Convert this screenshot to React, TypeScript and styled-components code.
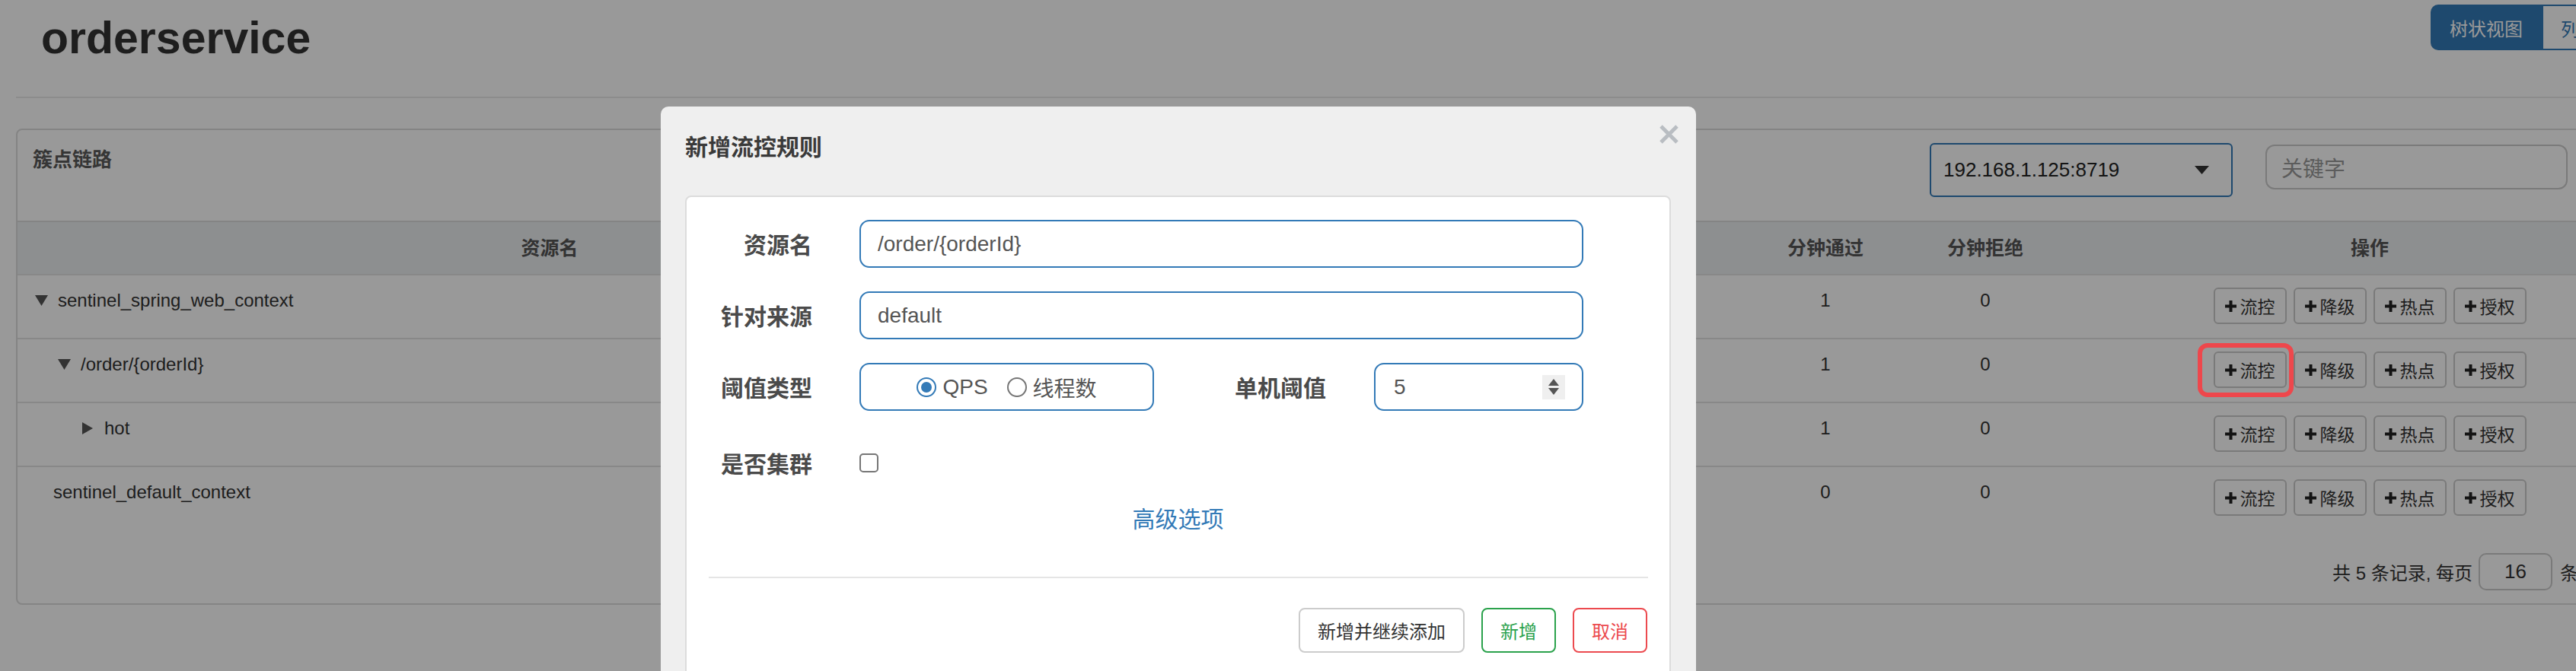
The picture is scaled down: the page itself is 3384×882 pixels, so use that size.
import React from 'react';
import styled, { createGlobalStyle } from 'styled-components';

const FONT = `"Liberation Sans", "Noto Sans CJK SC", sans-serif`;
const BLUE = '#337ab7';

const Global = createGlobalStyle`
  html, body { margin: 0; padding: 0; overflow: hidden; background: #fff; }
  body { font-family: ${FONT}; color: #333; }
  *, *::before, *::after { box-sizing: border-box; }
`;

const Page = styled.div`
  width: 3536px;
  height: 882px;
  padding: 0 21px;
`;

const Header = styled.header`
  display: flex;
  justify-content: space-between;
  align-items: flex-start;
  height: 129px;
  padding: 0 30px 0 33px;
  border-bottom: 2px solid #eaeaea;
`;

const Title = styled.h1`
  margin: 21px 0 0;
  font-size: 59px;
  line-height: 59px;
  font-weight: 700;
  color: #333;
`;

const ViewToggle = styled.div`
  display: flex;
  margin-top: 6px;
`;

const ToggleBtn = styled.button<{ $active?: boolean }>`
  width: 146px;
  height: 60px;
  font-family: ${FONT};
  font-size: 24px;
  border: 2px solid ${BLUE};
  background: ${p => (p.$active ? BLUE : '#fff')};
  color: ${p => (p.$active ? '#fff' : BLUE)};
  border-radius: ${p => (p.$active ? '10px 0 0 10px' : '0 10px 10px 0')};
  padding: 0;
`;

const Panel = styled.section`
  margin-top: 40px;
  border: 2px solid #ddd;
  border-radius: 8px;
  background: #fff;
  overflow: hidden;
`;

const PanelHeading = styled.div`
  display: flex;
  align-items: flex-start;
  height: 121px;
  padding: 0 20px;
  border-bottom: 2px solid #ddd;
`;

const HeadingTitle = styled.div`
  margin-top: 21px;
  font-size: 26px;
  line-height: 36px;
  font-weight: 700;
  color: #5a5a5a;
`;

const MachineSelect = styled.div`
  margin: 17px 0 0 auto;
  width: 398px;
  height: 71px;
  display: flex;
  align-items: center;
  justify-content: space-between;
  padding: 0 29px 0 16px;
  border: 2px solid ${BLUE};
  border-radius: 6px;
  font-size: 26px;
  color: #222;
`;

const KeywordInput = styled.div`
  margin: 19px 0 0 43px;
  width: 397px;
  height: 59px;
  display: flex;
  align-items: center;
  padding-left: 19px;
  border: 2px solid #ccc;
  border-radius: 12px;
  font-size: 28px;
  color: #999;
`;

const RefreshBtn = styled.div`
  margin: 19px 0 0 20px;
  width: 100px;
  height: 59px;
  display: flex;
  align-items: center;
  justify-content: center;
  border-radius: 10px;
  background: ${BLUE};
  color: #fff;
  font-size: 24px;
`;

const Table = styled.table`
  width: 100%;
  table-layout: fixed;
  border-collapse: separate;
  border-spacing: 0;
`;

const Th = styled.th`
  padding: 17px 0;
  line-height: 34px;
  font-size: 25px;
  font-weight: 700;
  color: #555;
  background: #eceef1;
  text-align: center;
  border-bottom: 2px solid #e3e3e3;
  white-space: nowrap;
`;

const Row = styled.tr`
  & > td {
    border-bottom: 2px solid #e3e3e3;
  }
  &:last-child > td {
    border-bottom: none;
  }
`;

const Td = styled.td<{ $center?: boolean }>`
  padding: 16px 0 18px;
  vertical-align: top;
  line-height: 34px;
  font-size: 24px;
  color: #333;
  text-align: ${p => (p.$center ? 'center' : 'left')};
`;

const TreeLabel = styled.div<{ $indent: number }>`
  display: flex;
  align-items: center;
  padding-left: ${p => p.$indent}px;
`;

const Caret = styled.svg<{ $gap: number }>`
  margin-right: ${p => p.$gap}px;
  flex: none;
`;

const OpsGroup = styled.div`
  display: inline-flex;
  gap: 9px;
`;

const OpWrap = styled.span`
  position: relative;
  display: inline-flex;
`;

const OpBtn = styled.button`
  height: 48px;
  display: inline-flex;
  align-items: center;
  gap: 5px;
  padding: 0 13px;
  border: 2px solid #ccc;
  border-radius: 6px;
  background: #fff;
  font-family: ${FONT};
  font-size: 23px;
  color: #333;
`;

const Highlight = styled.span`
  position: absolute;
  top: -11px;
  left: -21px;
  right: -9px;
  bottom: -12px;
  border: 6px solid #ee474c;
  border-radius: 13px;
  z-index: 30;
  pointer-events: none;
`;

const Footer = styled.div`
  display: flex;
  justify-content: flex-end;
  align-items: center;
  padding: 31px 20px 17px;
  font-size: 24px;
  color: #333;
`;

const PageSize = styled.div`
  width: 97px;
  height: 49px;
  margin: 0 10px 0 8px;
  display: flex;
  align-items: center;
  justify-content: center;
  border: 2px solid #ccc;
  border-radius: 10px;
  font-size: 26px;
`;

const Pager = styled.div`
  margin-left: 10px;
  width: 48px;
  height: 49px;
  display: flex;
  align-items: center;
  justify-content: center;
  background: ${BLUE};
  color: #fff;
  border-radius: 6px;
`;

const Backdrop = styled.div`
  position: fixed;
  inset: 0;
  background: rgba(0, 0, 0, 0.4);
  z-index: 10;
`;

const Modal = styled.div`
  position: absolute;
  top: 140px;
  left: 868px;
  width: 1360px;
  height: 800px;
  background: #efefef;
  border-radius: 10px;
  z-index: 20;
  display: flex;
  flex-direction: column;
`;

const ModalHeader = styled.div`
  display: flex;
  justify-content: space-between;
  align-items: flex-start;
  height: 117px;
  padding: 24px 23px 0 32px;
`;

const ModalTitle = styled.h4`
  margin: 12px 0 0;
  font-size: 30px;
  line-height: 36px;
  font-weight: 700;
  color: #3a3a3a;
`;

const CloseBtn = styled.svg`
  display: block;
`;

const Card = styled.div`
  margin: 0 33px 0 32px;
  flex: 1;
  background: #fff;
  border: 2px solid #dcdcdc;
  border-radius: 8px;
  padding-top: 30px;
`;

const FormRow = styled.div<{ $mt?: number }>`
  display: grid;
  grid-template-columns: 165px 951px;
  column-gap: 62px;
  align-items: center;
  margin-top: ${p => p.$mt ?? 0}px;
`;

const Label = styled.label`
  display: block;
  height: 63px;
  text-align: right;
  font-size: 30px;
  line-height: 58px;
  padding-top: 5px;
  font-weight: 700;
  color: #4a4a4a;
  white-space: nowrap;
`;

const TextBox = styled.div<{ $w?: number }>`
  height: 63px;
  width: ${p => (p.$w ? `${p.$w}px` : '100%')};
  display: flex;
  align-items: center;
  padding: 0 22px;
  border: 2px solid ${BLUE};
  border-radius: 13px;
  font-size: 28px;
  color: #555;
  flex: none;
`;

const Inline = styled.div`
  display: flex;
  align-items: center;
`;

const RadioBox = styled(TextBox)`
  justify-content: center;
  padding: 0;
`;

const RadioItem = styled.span`
  display: inline-flex;
  align-items: center;
  gap: 8px;
  margin-right: 25px;
  &:last-child { margin-right: 0; }
`;

const RadioDot = styled.span<{ $checked?: boolean }>`
  width: 26px;
  height: 26px;
  border-radius: 50%;
  border: 2px solid ${p => (p.$checked ? BLUE : '#767676')};
  display: inline-flex;
  align-items: center;
  justify-content: center;
  &::after {
    content: '';
    width: 14px;
    height: 14px;
    border-radius: 50%;
    background: ${p => (p.$checked ? BLUE : 'transparent')};
  }
`;

const InlineLabel = styled(Label)`
  width: 226px;
  margin-right: 63px;
`;

const NumberBox = styled(TextBox)`
  justify-content: space-between;
  padding: 0 22px 0 24px;
`;

const Spinner = styled.span`
  width: 30px;
  height: 32px;
  background: #efefef;
  display: flex;
  flex-direction: column;
  align-items: center;
  justify-content: center;
  gap: 3px;
`;

const Checkbox = styled.span`
  width: 25px;
  height: 25px;
  border: 2px solid #767676;
  border-radius: 5px;
  display: block;
`;

const AdvancedLink = styled.div`
  margin-top: 23px;
  text-align: center;
  font-size: 30px;
  line-height: 40px;
  color: ${BLUE};
`;

const Divider = styled.hr`
  margin: 55px 28px 0 29px;
  border: none;
  border-top: 2px solid #e5e5e5;
`;

const ActionBar = styled.div`
  display: flex;
  justify-content: flex-end;
  gap: 22px;
  margin: 39px 29px 0 0;
`;

const ActionBtn = styled.button<{ $tone: 'default' | 'green' | 'red' }>`
  height: 59px;
  padding: 0 23px;
  font-family: ${FONT};
  font-size: 24px;
  background: #fff;
  border-radius: 8px;
  border: 2px solid
    ${p => (p.$tone === 'green' ? '#2ba24c' : p.$tone === 'red' ? '#ec4a4f' : '#ccc')};
  color: ${p => (p.$tone === 'green' ? '#2ba24c' : p.$tone === 'red' ? '#ec4a4f' : '#333')};
`;

const PlusIcon = () => (
  <svg width="15" height="15" viewBox="0 0 15 15">
    <rect x="5.5" y="0" width="4" height="15" fill="#222" />
    <rect x="0" y="5.5" width="15" height="4" fill="#222" />
  </svg>
);

type Node = {
  name: string;
  indent: number;
  caret: 'down' | 'right' | null;
  pass: number;
  block: number;
};

const nodes: Node[] = [
  { name: 'sentinel_spring_web_context', indent: 23, caret: 'down', pass: 1, block: 0 },
  { name: '/order/{orderId}', indent: 53, caret: 'down', pass: 1, block: 0 },
  { name: 'hot', indent: 85, caret: 'right', pass: 1, block: 0 },
  { name: 'sentinel_default_context', indent: 47, caret: null, pass: 0, block: 0 },
];

const ops = ['流控', '降级', '热点', '授权'];

const columns: { title: string; width: number }[] = [
  { title: '资源名', width: 1398 },
  { title: '通过QPS', width: 218 },
  { title: '拒绝QPS', width: 218 },
  { title: '并发数', width: 218 },
  { title: '平均RT', width: 218 },
  { title: '分钟通过', width: 210 },
  { title: '分钟拒绝', width: 210 },
  { title: '操作', width: 800 },
];

export default function App() {
  return (
    <>
      <Global />
      <Page>
        <Header>
          <Title>orderservice</Title>
          <ViewToggle>
            <ToggleBtn $active>树状视图</ToggleBtn>
            <ToggleBtn>列表视图</ToggleBtn>
          </ViewToggle>
        </Header>

        <Panel>
          <PanelHeading>
            <HeadingTitle>簇点链路</HeadingTitle>
            <MachineSelect>
              <span>192.168.1.125:8719</span>
              <svg width="19" height="11" viewBox="0 0 19 11">
                <polygon points="0,0 19,0 9.5,11" fill="#333" />
              </svg>
            </MachineSelect>
            <KeywordInput>关键字</KeywordInput>
            <RefreshBtn>刷新</RefreshBtn>
          </PanelHeading>

          <Table>
            <colgroup>
              {columns.map(c => (
                <col key={c.title} style={{ width: c.width }} />
              ))}
            </colgroup>
            <thead>
              <tr>
                {columns.map(c => (
                  <Th key={c.title}>{c.title}</Th>
                ))}
              </tr>
            </thead>
            <tbody>
              {nodes.map((n, i) => (
                <Row key={n.name}>
                  <Td>
                    <TreeLabel $indent={n.indent}>
                      {n.caret === 'down' && (
                        <Caret $gap={13} width="17" height="14" viewBox="0 0 17 14">
                          <polygon points="0,0 17,0 8.5,14" fill="#555" />
                        </Caret>
                      )}
                      {n.caret === 'right' && (
                        <Caret $gap={15} width="14" height="16" viewBox="0 0 14 16">
                          <polygon points="0,0 14,8 0,16" fill="#555" />
                        </Caret>
                      )}
                      <span>{n.name}</span>
                    </TreeLabel>
                  </Td>
                  <Td $center>{n.pass}</Td>
                  <Td $center>0</Td>
                  <Td $center>0</Td>
                  <Td $center>0</Td>
                  <Td $center>{n.pass}</Td>
                  <Td $center>{n.block}</Td>
                  <Td $center>
                    <OpsGroup>
                      {ops.map((o, j) => (
                        <OpWrap key={o}>
                          <OpBtn>
                            <PlusIcon />
                            {o}
                          </OpBtn>
                          {i === 1 && j === 0 && <Highlight />}
                        </OpWrap>
                      ))}
                    </OpsGroup>
                  </Td>
                </Row>
              ))}
            </tbody>
          </Table>

          <Footer>
            <span>共 5 条记录, 每页</span>
            <PageSize>16</PageSize>
            <span>条记录</span>
            <Pager>1</Pager>
          </Footer>
        </Panel>
      </Page>

      <Backdrop />

      <Modal>
        <ModalHeader>
          <ModalTitle>新增流控规则</ModalTitle>
          <CloseBtn width="25" height="25" viewBox="0 0 25 25">
            <line x1="2" y1="2" x2="23" y2="23" stroke="#b9bdc2" strokeWidth="5" />
            <line x1="23" y1="2" x2="2" y2="23" stroke="#b9bdc2" strokeWidth="5" />
          </CloseBtn>
        </ModalHeader>
        <Card>
          <FormRow>
            <Label>资源名</Label>
            <TextBox>/order/{'{orderId}'}</TextBox>
          </FormRow>
          <FormRow $mt={31}>
            <Label>针对来源</Label>
            <TextBox>default</TextBox>
          </FormRow>
          <FormRow $mt={31}>
            <Label>阈值类型</Label>
            <Inline>
              <RadioBox $w={387}>
                <RadioItem>
                  <RadioDot $checked />
                  QPS
                </RadioItem>
                <RadioItem>
                  <RadioDot />
                  线程数
                </RadioItem>
              </RadioBox>
              <InlineLabel>单机阈值</InlineLabel>
              <NumberBox $w={275}>
                <span>5</span>
                <Spinner>
                  <svg width="14" height="9" viewBox="0 0 14 9">
                    <polygon points="7,0 14,9 0,9" fill="#555" />
                  </svg>
                  <svg width="14" height="9" viewBox="0 0 14 9">
                    <polygon points="0,0 14,0 7,9" fill="#555" />
                  </svg>
                </Spinner>
              </NumberBox>
            </Inline>
          </FormRow>
          <FormRow $mt={37}>
            <Label>是否集群</Label>
            <Checkbox />
          </FormRow>
          <AdvancedLink>高级选项</AdvancedLink>
          <Divider />
          <ActionBar>
            <ActionBtn $tone="default">新增并继续添加</ActionBtn>
            <ActionBtn $tone="green">新增</ActionBtn>
            <ActionBtn $tone="red">取消</ActionBtn>
          </ActionBar>
        </Card>
      </Modal>
    </>
  );
}
